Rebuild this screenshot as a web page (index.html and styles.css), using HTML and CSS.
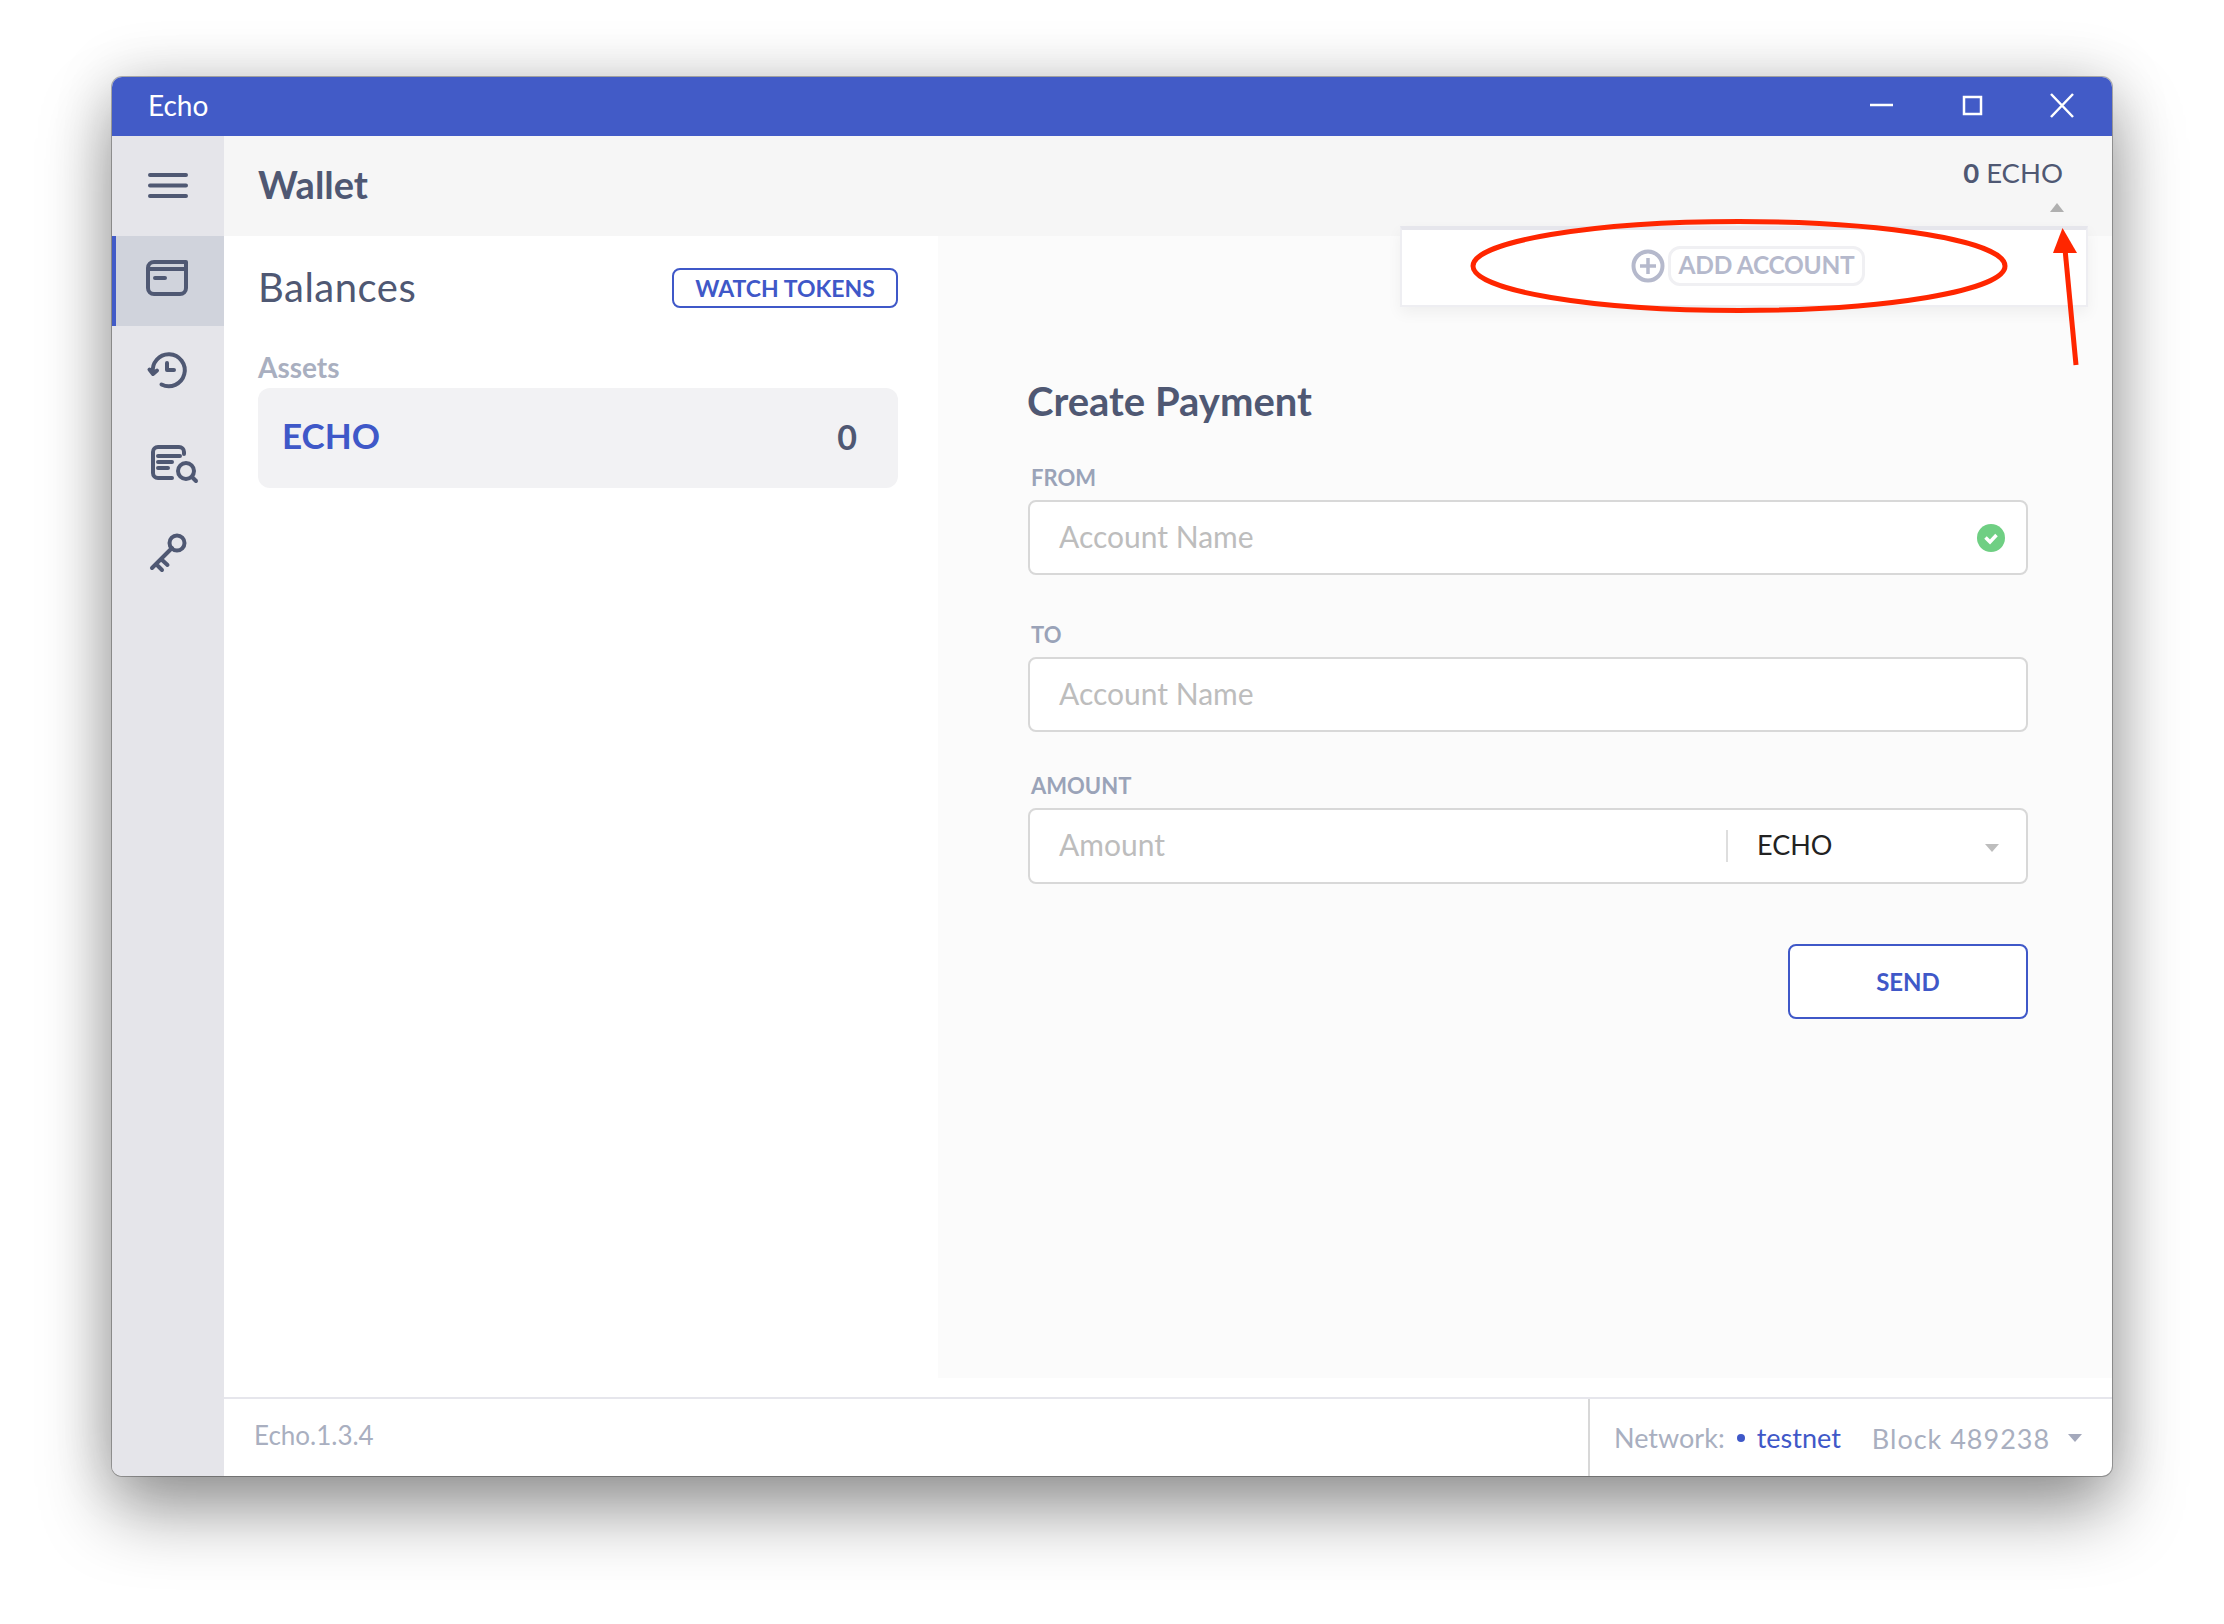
FILE: index.html
```html
<!DOCTYPE html>
<html>

<head>
    <title>Echo</title>
    <link rel="stylesheet" href="styles.css">
</head>

<body>
    <div class="window">
        <div class="titlebar">
            <span class="titlebar-name">Echo</span>
            <svg class="titlebar-controls" width="220" height="59" viewBox="0 0 220 59">
                <path d="M8 28H31" stroke="#fff" stroke-width="2.5" fill="none" />
                <rect x="102" y="20" width="17" height="17" stroke="#fff" stroke-width="2.5" fill="none" />
                <path d="M189 17L211 40M211 17L189 40" stroke="#fff" stroke-width="2.5" fill="none" />
            </svg>
        </div>

        <div class="body">
            <div class="sidebar">
                <div class="nav-item nav-menu">
                    <svg class="nav-icon" width="112" height="100" viewBox="0 0 112 100">
                        <path d="M38 39H74M38 49.5H74M38 60H74" />
                    </svg>
                </div>
                <div class="nav-item nav-active">
                    <svg class="nav-icon" width="112" height="90" viewBox="0 0 112 90">
                        <path d="M74 26V52a6 6 0 0 1-6 6H42a6 6 0 0 1-6-6V32a6 6 0 0 1 6-6ZM36 33H74M43 42H53" />
                    </svg>
                </div>
                <div class="nav-item">
                    <svg class="nav-icon" width="112" height="90" viewBox="0 0 112 90">
                        <path d="M41 47A16 16 0 1 1 49.5 58.5M37.5 43.5L41 48L45 44.5M55 37V44H62" />
                    </svg>
                </div>
                <div class="nav-item">
                    <svg class="nav-icon" width="112" height="90" viewBox="0 0 112 90">
                        <path d="M72 38V36a5 5 0 0 0-5-5H46a5 5 0 0 0-5 5V57a5 5 0 0 0 5 5H60M46 40H68M46 46H60M46 52H56" />
                        <circle cx="74" cy="55" r="8" />
                        <path d="M80 61L84 65" />
                    </svg>
                </div>
                <div class="nav-item">
                    <svg class="nav-icon" width="112" height="90" viewBox="0 0 112 90">
                        <circle cx="65" cy="37" r="7.5" />
                        <path d="M60 42L40 62M49 53L55.5 59M44 58L50 64" />
                    </svg>
                </div>
            </div>

            <div class="main">
                <div class="header">
                    <div class="header-title">Wallet</div>
                    <div class="header-balance">
                        <div class="header-amount"><b>0</b> ECHO</div>
                        <div class="caret-up"></div>
                    </div>
                    <div class="account-menu">
                        <svg width="34" height="34" viewBox="0 0 34 34">
                            <circle cx="17" cy="17" r="14.5" fill="none" stroke="#b5b9cc" stroke-width="4" />
                            <path d="M17 9V25M9 17H25" stroke="#b5b9cc" stroke-width="3.5" fill="none" />
                        </svg>
                        <div class="add-account">ADD ACCOUNT</div>
                    </div>
                </div>

                <div class="panels">
                    <div class="balances">
                        <div class="balances-head">
                            <div class="balances-title">Balances</div>
                            <div class="btn-watch">WATCH TOKENS</div>
                        </div>
                        <div class="assets-label">Assets</div>
                        <div class="asset">
                            <span class="asset-name">ECHO</span>
                            <span class="asset-value">0</span>
                        </div>
                    </div>

                    <div class="payment">
                        <div class="payment-title">Create Payment</div>

                        <div class="field-label">FROM</div>
                        <div class="input">
                            <span class="placeholder">Account Name</span>
                            <svg class="check" width="28" height="28" viewBox="0 0 28 28">
                                <circle cx="14" cy="14" r="14" fill="#6fcf83" />
                                <path d="M8.5 13.5L13 18L19.5 11" stroke="#fff" stroke-width="3.5" fill="none" />
                            </svg>
                        </div>

                        <div class="field-label label-to">TO</div>
                        <div class="input">
                            <span class="placeholder">Account Name</span>
                        </div>

                        <div class="field-label label-amount">AMOUNT</div>
                        <div class="input input-amount">
                            <span class="placeholder amount-text">Amount</span>
                            <div class="amount-select">
                                <span class="amount-coin">ECHO</span>
                                <div class="caret-down caret-light"></div>
                            </div>
                        </div>

                        <div class="send-row">
                            <div class="btn-send">SEND</div>
                        </div>
                    </div>
                </div>

                <div class="footer">
                    <div class="footer-version">Echo.1.3.4</div>
                    <div class="footer-status">
                        <span class="network-label">Network:</span>
                        <span class="network-dot"></span>
                        <span class="network-name">testnet</span>
                        <span class="block-label">Block 489238</span>
                        <div class="caret-down"></div>
                    </div>
                </div>
            </div>
        </div>

        <!-- red marks drawn on top of the screenshot -->
        <svg class="marks" width="2000" height="1399" viewBox="0 0 2000 1399">
            <ellipse cx="1627" cy="189" rx="266" ry="44.5" fill="none" stroke="#ff2600" stroke-width="5" />
            <path d="M1964 288L1953 172" fill="none" stroke="#ff2600" stroke-width="5" />
            <path d="M1950.5 151L1941 176L1965 176Z" fill="#ff2600" />
        </svg>
    </div>
</body>

</html>
```

FILE: styles.css
```css
* {
    box-sizing: border-box;
}

body {
    margin: 0;
    height: 1624px;
    padding: 77px 112px 0;
    background: #fff;
    font-family: "Lato", "Liberation Sans", sans-serif;
    overflow: hidden;
}

.window {
    position: relative;
    display: flex;
    flex-direction: column;
    width: 2000px;
    height: 1399px;
    border-radius: 10px;
    overflow: hidden;
    background: #fff;
    box-shadow: 0 0 0 1px rgba(0, 0, 0, 0.28), 0 36px 70px rgba(0, 0, 0, 0.38), 0 0 60px rgba(0, 0, 0, 0.16);
}

.titlebar {
    display: flex;
    align-items: center;
    justify-content: space-between;
    height: 59px;
    padding: 0 30px 0 36px;
    background: #425bc7;
    color: #fff;
    font-size: 28px;
    flex-shrink: 0;
}

.titlebar-name {
    margin-top: -4px;
}

.titlebar-controls {
    display: block;
}

.body {
    display: flex;
    flex: 1;
    min-height: 0;
}

.sidebar {
    width: 112px;
    background: #e5e5ea;
    flex-shrink: 0;
}

.nav-item {
    height: 90px;
}

.nav-menu {
    height: 100px;
}

.nav-active {
    background: #d0d3dc;
    box-shadow: inset 4px 0 0 #425bc7;
}

.nav-icon {
    display: block;
    fill: none;
    stroke: #4f5873;
    stroke-width: 4;
    stroke-linecap: round;
    stroke-linejoin: round;
}

.main {
    display: flex;
    flex-direction: column;
    flex: 1;
    min-width: 0;
}

.header {
    position: relative;
    display: flex;
    justify-content: space-between;
    height: 100px;
    padding: 0 49px 0 34px;
    background: #f6f6f6;
    flex-shrink: 0;
}

.header-title {
    font-size: 38px;
    font-weight: 700;
    line-height: 96px;
    color: #4f5873;
}

.header-balance {
    display: flex;
    flex-direction: column;
    align-items: flex-end;
    padding-top: 21px;
}

.header-amount {
    font-size: 27.5px;
    line-height: 32px;
    color: #4f5873;
}

.caret-up {
    width: 0;
    height: 0;
    margin: 14px -1px 0 0;
    border-left: 7px solid transparent;
    border-right: 7px solid transparent;
    border-bottom: 9px solid #b0b0b0;
}

.caret-down {
    width: 0;
    height: 0;
    border-left: 7px solid transparent;
    border-right: 7px solid transparent;
    border-top: 8px solid #a4a9bc;
}

.caret-light {
    border-top-color: #bdbdbd;
    margin-top: 4px;
}

.account-menu {
    position: absolute;
    top: 90px;
    right: 24px;
    display: flex;
    align-items: center;
    justify-content: center;
    gap: 3px;
    width: 688px;
    height: 81px;
    padding: 0 0 4px 8px;
    background: #fff;
    border: 2px solid #eeeef2;
    border-top: 4px solid #e6e6ec;
    box-shadow: 0 6px 14px rgba(0, 0, 0, 0.05);
    z-index: 2;
}

.add-account {
    height: 40px;
    padding: 0 8px;
    border: 3px solid #f0f0f3;
    border-radius: 12px;
    font-size: 24.5px;
    font-weight: 700;
    letter-spacing: -0.3px;
    line-height: 32px;
    color: #b5b9cc;
}

.panels {
    display: flex;
    flex: 1;
    min-height: 0;
}

.balances {
    width: 714px;
    padding: 32px 40px 0 34px;
    background: #fff;
    flex-shrink: 0;
}

.balances-head {
    display: flex;
    align-items: center;
    justify-content: space-between;
    height: 40px;
}

.balances-title {
    margin-top: -2px;
    font-size: 40px;
    letter-spacing: 0.5px;
    color: #4f5873;
}

.btn-watch {
    width: 226px;
    height: 40px;
    border: 2px solid #3f58c8;
    border-radius: 8px;
    text-align: center;
    font-size: 23px;
    font-weight: 700;
    line-height: 36px;
    color: #3f58c8;
}

.assets-label {
    margin-top: 41px;
    padding-bottom: 3px;
    font-size: 28px;
    line-height: 36px;
    font-weight: 700;
    color: #a9afc0;
}

.asset {
    display: flex;
    align-items: center;
    justify-content: space-between;
    height: 100px;
    padding: 0 41px 0 24px;
    background: #f2f2f4;
    border-radius: 12px;
}

.asset-name {
    margin-top: -7px;
    font-size: 35px;
    font-weight: 700;
    color: #3f58c8;
}

.asset-value {
    margin-top: -4px;
    font-size: 34px;
    font-weight: 700;
    color: #4f5873;
}

.payment {
    flex: 1;
    padding: 146px 84px 0 90px;
    background: #fbfbfb;
    margin-bottom: 19px;
}

.payment-title {
    margin-left: -1px;
    font-size: 40px;
    font-weight: 700;
    line-height: 38px;
    padding-bottom: 2px;
    color: #4f5873;
}

.field-label {
    margin-top: 42px;
    padding-left: 3px;
    font-size: 22px;
    font-weight: 700;
    line-height: 28px;
    color: #9aa3b8;
}

.label-to {
    margin-top: 46px;
}

.label-amount {
    margin-top: 40px;
}

.input {
    display: flex;
    align-items: center;
    justify-content: space-between;
    height: 75px;
    margin-top: 8px;
    padding: 0 14px 0 29px;
    background: #fff;
    border: 2px solid #d8d8d8;
    border-radius: 8px;
}

.input-amount {
    height: 76px;
}

.placeholder {
    margin-top: -4px;
    font-size: 30px;
    color: #bdbdbd;
}

.check {
    display: block;
    margin-right: 7px;
}

.amount-text {
    flex: 1;
}

.amount-select {
    display: flex;
    align-items: center;
    justify-content: space-between;
    width: 286px;
    height: 32px;
    padding: 0 13px 0 29px;
    border-left: 2px solid #dedede;
}

.amount-coin {
    margin-top: -3px;
    font-size: 27px;
    color: #222;
}

.send-row {
    display: flex;
    justify-content: flex-end;
    margin-top: 60px;
}

.btn-send {
    width: 240px;
    height: 75px;
    background: #fff;
    border: 2px solid #3f58c8;
    border-radius: 8px;
    text-align: center;
    font-size: 24px;
    font-weight: 700;
    line-height: 71px;
    color: #3f58c8;
}

.footer {
    display: flex;
    height: 79px;
    border-top: 2px solid #e6e6ec;
    flex-shrink: 0;
}

.footer-version {
    width: 1364px;
    padding-left: 30px;
    font-size: 26px;
    line-height: 72px;
    color: #a9afc0;
}

.footer-status {
    display: flex;
    align-items: center;
    flex: 1;
    padding: 0 0 0 24px;
    border-left: 2px solid #d8d8d8;
    font-size: 27px;
    color: #a9afc0;
}

.network-dot {
    width: 8px;
    height: 8px;
    margin: 0 12px 0 12px;
    border-radius: 50%;
    background: #3f58c8;
}

.network-name {
    color: #3f58c8;
}

.block-label {
    margin: 2px 18px 0 31px;
    letter-spacing: 1px;
}

.marks {
    position: absolute;
    top: 0;
    left: 0;
    z-index: 3;
}
```
